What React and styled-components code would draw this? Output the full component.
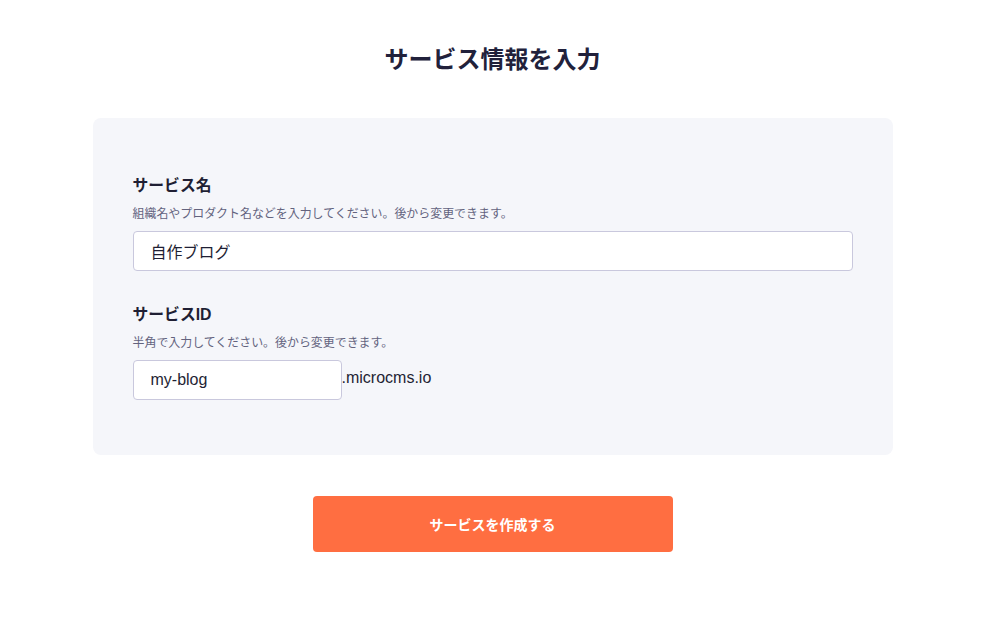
import styled, { createGlobalStyle } from "styled-components";

const GlobalStyle = createGlobalStyle`
  body {
    margin: 0;
    background: #fff;
    font-family: "Liberation Sans", "Noto Sans CJK JP", sans-serif;
    color: #21213b;
  }
`;

// the reference leaves room for a scrollbar on the right
const Page = styled.div`
  display: flex;
  flex-direction: column;
  align-items: center;
  padding: 42px 17px 0 0;
`;

const Title = styled.h1`
  margin: 0 0 40px;
  font-size: 24px;
  line-height: 36px;
  font-weight: bold;
  color: #21213b;
`;

const Panel = styled.div`
  box-sizing: border-box;
  width: 800px;
  padding: 56px 40px 55px;
  background: #f5f6fa;
  border-radius: 8px;
  display: flex;
  flex-direction: column;
  gap: 32px;
`;

const Field = styled.div`
  display: flex;
  flex-direction: column;
`;

const Label = styled.label`
  font-size: 15.8px;
  line-height: 24px;
  font-weight: bold;
  color: #1f1f34;
  margin-bottom: 7px;
`;

const Help = styled.p`
  margin: 0 0 8px;
  font-size: 11.95px;
  line-height: 18px;
  color: #63637e;
`;

const Row = styled.div`
  display: flex;
  align-items: center;
`;

const Input = styled.input`
  box-sizing: border-box;
  width: ${(p) => p.$width || "100%"};
  height: 40px;
  padding: 0 17px;
  border: 1px solid #c9c8dd;
  border-radius: 4px;
  background: #fff;
  font-family: "Liberation Sans", "Noto Sans CJK JP", sans-serif;
  font-size: 16px;
  color: #1f1f34;

  &:focus {
    outline: none;
  }
`;

const Suffix = styled.span`
  font-size: 16px;
  color: #1f1f34;
  margin-top: -4px;
`;

const SubmitButton = styled.button`
  margin-top: 41px;
  width: 360px;
  height: 56px;
  border: none;
  border-radius: 4px;
  background: #ff6e41;
  color: #fff;
  font-family: "Liberation Sans", "Noto Sans CJK JP", sans-serif;
  font-size: 14px;
  font-weight: bold;
  cursor: pointer;
`;

export default function App() {
  return (
    <>
      <GlobalStyle />
      <Page>
        <Title>サービス情報を入力</Title>
        <Panel>
          <Field>
            <Label>サービス名</Label>
            <Help>組織名やプロダクト名などを入力してください。後から変更できます。</Help>
            <Input defaultValue="自作ブログ" />
          </Field>
          <Field>
            <Label>サービスID</Label>
            <Help>半角で入力してください。後から変更できます。</Help>
            <Row>
              <Input $width="209px" defaultValue="my-blog" />
              <Suffix>.microcms.io</Suffix>
            </Row>
          </Field>
        </Panel>
        <SubmitButton>サービスを作成する</SubmitButton>
      </Page>
    </>
  );
}
